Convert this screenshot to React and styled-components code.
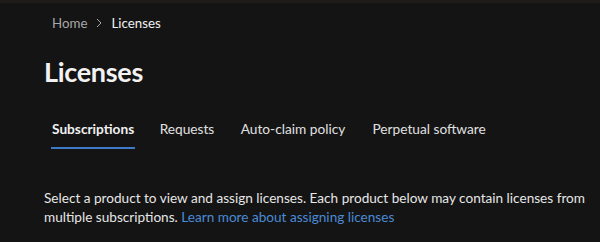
import React from 'react';
import styled, { createGlobalStyle } from 'styled-components';

const GlobalStyle = createGlobalStyle`
    html, body {
        margin: 0;
        padding: 0;
        background: #141414;
    }

    body {
        font-family: Lato, "Open Sans", sans-serif;
        color: #e6e6e6;
        -webkit-font-smoothing: antialiased;
    }
`;

const Page = styled.div`
    width: 600px;
    height: 242px;
    overflow: hidden;
    background: #141414;
    border-top: 3px solid #1e1c1b;
    box-sizing: border-box;
`;

const Content = styled.div`
    padding: 0 6px 0 44px;
`;

const Breadcrumb = styled.nav`
    display: flex;
    align-items: center;
    gap: 9px;
    height: 40px;
    padding-left: 8px;
    font-size: 13.3px;
`;

const Crumb = styled.span`
    color: ${(p) => (p.current ? '#f0f0f0' : '#a8a8a8')};
`;

const Chevron = styled.svg`
    width: 6px;
    height: 10px;
    display: block;
`;

const Title = styled.h1`
    margin: 10px 0 0;
    font-size: 27px;
    font-weight: 700;
    line-height: 38px;
    letter-spacing: -0.3px;
    color: #f2f2f2;
`;

const Tabs = styled.div`
    display: flex;
    margin-top: 18px;
`;

const Tab = styled.button`
    position: relative;
    display: inline-flex;
    flex-direction: column;
    align-items: center;
    height: 40px;
    line-height: 40px;
    padding: 0 8px;
    margin-right: 9px;
    border: 0;
    background: none;
    font-family: inherit;
    font-size: 13.7px;
    font-weight: ${(p) => (p.active ? 700 : 400)};
    color: ${(p) => (p.active ? '#f0f0f0' : '#e0e0e0')};
    cursor: pointer;

    &::before {
        content: attr(data-label);
        font-weight: 700;
        height: 0;
        visibility: hidden;
        overflow: hidden;
    }

    &::after {
        content: '';
        position: absolute;
        left: 7px;
        right: 7px;
        bottom: 0;
        height: 2px;
        background: ${(p) => (p.active ? '#3f7ac6' : 'transparent')};
    }
`;

const Description = styled.p`
    margin: 40px 0 0;
    font-size: 13.6px;
    line-height: 19px;
    color: #e6e6e6;
`;

const Link = styled.a`
    color: #4a8bd6;
    text-decoration: none;
`;

const TABS = ['Subscriptions', 'Requests', 'Auto-claim policy', 'Perpetual software'];

export default function App() {
    return (
        <>
            <GlobalStyle />
            <Page>
                <Content>
                    <Breadcrumb>
                        <Crumb>Home</Crumb>
                        <Chevron viewBox="0 0 6 10">
                            <path d="M1 1l4 4-4 4" fill="none" stroke="#a8a8a8" strokeWidth="1" />
                        </Chevron>
                        <Crumb current>Licenses</Crumb>
                    </Breadcrumb>
                    <Title>Licenses</Title>
                    <Tabs>
                        {TABS.map((t, i) => (
                            <Tab key={t} data-label={t} active={i === 0}>
                                {t}
                            </Tab>
                        ))}
                    </Tabs>
                    <Description>
                        Select a product to view and assign licenses. Each product below may contain licenses from
                        multiple subscriptions. <Link href="#">Learn more about assigning licenses</Link>
                    </Description>
                </Content>
            </Page>
        </>
    );
}
